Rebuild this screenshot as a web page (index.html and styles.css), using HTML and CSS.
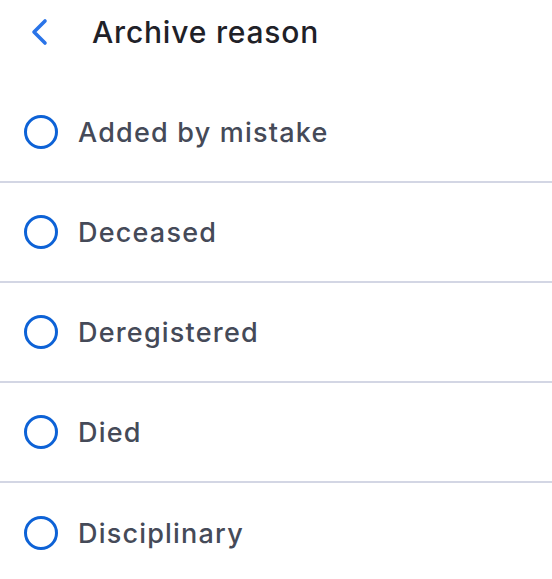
FILE: index.html
```html
<!DOCTYPE html>
<html lang="en">
<head>
    <meta charset="UTF-8">
    <meta name="viewport" content="width=device-width, initial-scale=1.0">
    <title>Archive reason</title>
    <link rel="stylesheet" href="styles.css">
</head>
<body>
    <!-- Header -->
    <div class="header">
        <button class="back" aria-label="Back">
            <svg width="18" height="28" viewBox="0 0 18 28">
                <path d="M15 3 L4 14 L15 25" fill="none" stroke="#2a74e8" stroke-width="3.6" stroke-linecap="round" stroke-linejoin="round"/>
            </svg>
        </button>
        <h1 class="title">Archive reason</h1>
    </div>

    <!-- Reasons -->
    <ul class="reasons">
        <li class="reason"><span class="radio"></span>Added by mistake</li>
        <li class="reason"><span class="radio"></span>Deceased</li>
        <li class="reason"><span class="radio"></span>Deregistered</li>
        <li class="reason"><span class="radio"></span>Died</li>
        <li class="reason"><span class="radio"></span>Disciplinary</li>
    </ul>
</body>
</html>
```

FILE: styles.css
```css
body {
    margin: 0;
    font-family: Inter, "Noto Sans", sans-serif;
    background-color: #fff;
    color: #454a58;
}
.header {
    display: flex;
    align-items: center;
    height: 64px;
    padding-left: 30px;
}
.back {
    display: flex;
    align-items: center;
    padding: 0;
    border: none;
    background: none;
    cursor: pointer;
}
.title {
    margin: 0 0 0 44px;
    font-size: 30px;
    font-weight: 500;
    letter-spacing: 0.8px;
    color: #1f2128;
}
.reasons {
    list-style: none;
    margin: 0;
    padding: 19px 0 0;
}
.reason {
    box-sizing: border-box;
    display: flex;
    align-items: center;
    height: 100px;
    padding-left: 24px;
    font-size: 27px;
    font-weight: 500;
    letter-spacing: 1.2px;
    border-bottom: 2px solid #d3d6e4;
}
.reason:last-child {
    border-bottom: none;
}
.radio {
    width: 28px;
    height: 28px;
    border: 3px solid #0d62d6;
    border-radius: 50%;
    margin-right: 20px;
    flex-shrink: 0;
}
```
